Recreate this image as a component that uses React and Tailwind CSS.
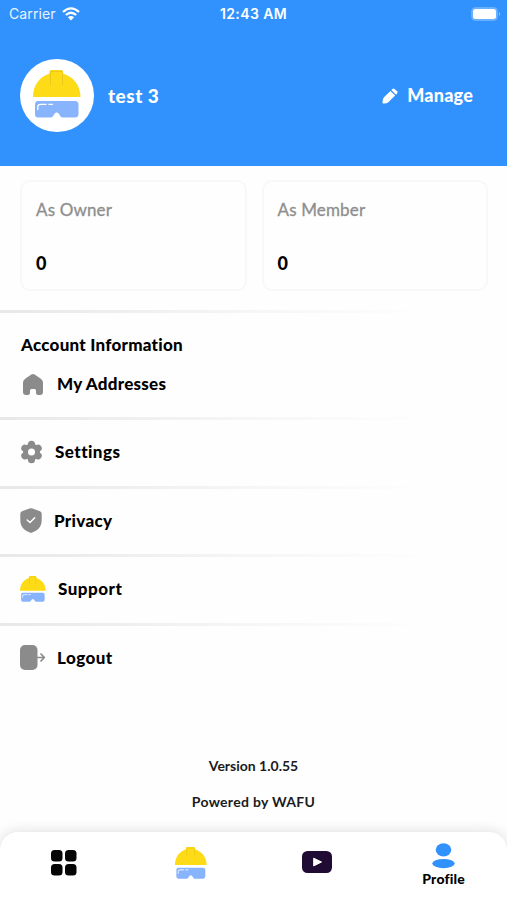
import React from "react";

const HelmetIcon = ({ className }) => (
  <svg viewBox="0 0 48 48" className={className}>
    <path
      d="M0 27C0 15 7 6.500 16.500 3.500V1.500Q16.500 0 18 0H28.500Q30 0 30 1.500V3.500C40 6.500 47.500 15 47.500 27Z"
      fill="#fddb17"
    />
    <path
      d="M17.500 15V1.500H29.500V15"
      fill="none"
      stroke="#d9b51c"
      strokeWidth="0.500"
    />
    <path
      d="M5 31H42Q45.500 31 45.500 34.500V44Q45.500 47.500 42 47.500H29.500C27 47.500 26.500 42.500 23.700 42.500S20.500 47.500 18 47.500H5Q2 47.500 2 44V34.500Q2 31 5 31Z"
      fill="#88b4fd"
    />
    <path
      d="M4.800 40V37Q4.800 34.300 7.500 34.300H13.500M15.500 34.300H20"
      fill="none"
      stroke="#fff"
      strokeWidth="1.300"
    />
  </svg>
);

const WifiIcon = () => (
  <svg viewBox="0 0 18 14" className="h-[14px] w-[18px]" fill="none" stroke="#fff">
    <path d="M1 5Q9-2.200 17 5" strokeWidth="2.300" />
    <path d="M3.800 8Q9 3.500 14.200 8" strokeWidth="2.200" />
    <path d="M9 13.500L5.900 10.300Q9 7.700 12.100 10.300Z" fill="#fff" stroke="none" />
  </svg>
);

const BatteryIcon = () => (
  <svg viewBox="0 0 30 14" className="h-[14px] w-[30px]">
    <rect x="0.500" y="0.500" width="26" height="13" rx="4" fill="#69b0ff" stroke="#69b0ff" />
    <rect x="2" y="2" width="23" height="10" rx="2.500" fill="#fff" />
    <path d="M28 5Q30 7 28 9Z" fill="#9ccbff" />
  </svg>
);

const PencilIcon = () => (
  <svg viewBox="0 0 16 16" className="h-[16px] w-[16px]" fill="#fff">
    <path d="M8.400 2.900L13.100 7.600L6.600 14Q5 15.600 1.500 15.500Q.4 15.500 .4 14.500Q.3 11 2 9.300Z" />
    <path d="M9.300 2L10.500 .9Q11.500 0 12.600 .9L15.100 3.300Q16 4.400 15.100 5.500L14 6.700Z" />
  </svg>
);

const HomeIcon = () => (
  <svg viewBox="0 0 20 21" className="ml-[2px] h-[21px] w-[20px]">
    <path
      d="M8.300 .6Q10 -.5 11.700 .6L17.800 4.700Q20 6.200 20 8.500V18Q20 21 17 21H15.500Q13 21 13 18.500V16.500Q13 15 11.500 15H8.500Q7 15 7 16.500V18.500Q7 21 4.500 21H3Q0 21 0 18V8.500Q0 6.200 2.200 4.700Z"
      fill="#8b8b8b"
    />
  </svg>
);

const GearIcon = () => (
  <svg viewBox="0 0 24 24" className="h-[24px] w-[23px]">
    <path
      d="M12 12V4M12 12V20M12 12L5 8M12 12L19 16M12 12L5 16M12 12L19 8"
      stroke="#8b8b8b"
      strokeWidth="7.400"
      strokeLinecap="round"
    />
    <circle cx="12" cy="12" r="8.800" fill="#8b8b8b" />
    <circle cx="12" cy="12" r="3.700" fill="#fff" />
  </svg>
);

const ShieldIcon = () => (
  <svg viewBox="0 0 22 25" className="h-[25px] w-[22px]">
    <path
      d="M9.500 .6Q11 0 12.500 .6L20 3.300Q21.700 4 21.700 5.700V12Q21.700 18 18 21.200Q15.300 23.600 11 25Q6.700 23.600 4 21.200Q.3 18 .3 12V5.700Q.3 4 2 3.300Z"
      fill="#8b8b8b"
    />
    <path
      d="M7.200 12L10 14.500L14.700 9.700"
      fill="none"
      stroke="#fff"
      strokeWidth="1.500"
      strokeLinecap="round"
      strokeLinejoin="round"
    />
  </svg>
);

const LogoutIcon = () => (
  <svg viewBox="0 0 25 25" className="h-[25px] w-[25px]">
    <rect width="17.500" height="25" rx="5" fill="#8b8b8b" />
    <path
      d="M17 12.500H24M20.500 8.500L24.300 12.500L20.500 16.500"
      fill="none"
      stroke="#8b8b8b"
      strokeWidth="1.600"
    />
  </svg>
);

const GridIcon = () => (
  <svg viewBox="0 0 26 26" className="h-[26px] w-[26px]" fill="#050505">
    <rect width="11.500" height="11.500" rx="3.500" />
    <rect x="14" width="11.500" height="11.500" rx="3.500" />
    <rect y="14" width="11.500" height="11.500" rx="3.500" />
    <rect x="14" y="14" width="11.500" height="11.500" rx="3.500" />
  </svg>
);

const VideoIcon = () => (
  <svg viewBox="0 0 30 22" className="h-[22px] w-[30px]">
    <rect width="30" height="22" rx="5.500" fill="#200b35" />
    <path d="M11.700 7.200L19.500 11L11.700 14.900Z" fill="#fff" stroke="#fff" strokeLinejoin="round" />
  </svg>
);

const ProfileIcon = () => (
  <svg viewBox="0 0 23 26" className="h-[26px] w-[23px]" fill="#3292fd">
    <ellipse cx="11.500" cy="6.800" rx="7.800" ry="6.600" />
    <ellipse cx="11.500" cy="20.600" rx="11.200" ry="4.600" />
  </svg>
);

const Divider = () => (
  <div className="h-[3px] bg-linear-to-r from-[#e8e8e8] via-[#f6f6f6] via-50% to-[#fefefe] to-85%" />
);

const stats = [
  { label: "As Owner", value: 0 },
  { label: "As Member", value: 0 },
];

const menu = [
  { label: "Settings", icon: <GearIcon />, spacing: "tracking-[0.45px]" },
  { label: "Privacy", icon: <ShieldIcon />, spacing: "tracking-[0.3px]" },
  {
    label: "Support",
    icon: <HelmetIcon className="h-[26px] w-[26px]" />,
    spacing: "tracking-[0.5px]",
  },
  { label: "Logout", icon: <LogoutIcon />, spacing: "tracking-[0.45px]" },
];

const App = () => {
  return (
    <div className="flex h-[900px] w-[507px] flex-col overflow-hidden bg-[#fefefe] font-[Lato,sans-serif] text-black [font-variant-ligatures:none]">
      {/* Header */}
      <header className="h-[166px] bg-[#3292fd] text-white">
        <div className="grid h-[27px] grid-cols-3 items-center pl-[9px] pr-[6px] font-[Inter,sans-serif] text-[14px]">
          <div className="flex items-center gap-[6px]">
            <span className="tracking-[0.1px] opacity-90">Carrier</span>
            <WifiIcon />
          </div>
          <span className="-ml-[3px] text-center font-semibold tracking-[0.4px]">12:43 AM</span>
          <div className="flex justify-end">
            <BatteryIcon />
          </div>
        </div>
        <div className="mt-[32px] flex items-center justify-between pl-[20px] pr-[34px]">
          <div className="flex items-center gap-[14px]">
            <div className="flex h-[73px] w-[74px] items-center justify-center rounded-full bg-white pb-[3px]">
              <HelmetIcon className="h-[48px] w-[48px]" />
            </div>
            <span className="pt-[2px] text-[19px] font-black tracking-[0.5px]">test 3</span>
          </div>
          <button className="flex items-center gap-[9px] text-[18px] font-black tracking-[0.2px]">
            <PencilIcon />
            Manage
          </button>
        </div>
      </header>

      {/* Project counts */}
      <section className="grid grid-cols-2 gap-[15px] pl-[20px] pr-[19px] pt-[14px]">
        {stats.map((stat) => (
          <div
            key={stat.label}
            className="h-[111px] rounded-[10px] border-2 border-[#f8f8f8] px-[14px] pt-[16px]"
          >
            <p className="text-[17px] leading-6 tracking-[0.15px] text-[#8e8e8e] [-webkit-text-stroke:0.3px_#8e8e8e]">
              {stat.label}
            </p>
            <p className="mt-[29px] text-[18px] leading-6 font-black">{stat.value}</p>
          </div>
        ))}
      </section>

      {/* Account menu */}
      <section className="pt-[19px] text-[17px] font-black">
        <Divider />
        <div className="h-[104px] pl-[21px] pt-[20px]">
          <h2 className="leading-6 tracking-[0.25px]">Account Information</h2>
          <div className="mt-[15px] flex items-center gap-[14px] leading-6">
            <HomeIcon />
            <span className="tracking-[0.25px]">My Addresses</span>
          </div>
        </div>
        {menu.map((item) => (
          <div key={item.label}>
            <Divider />
            <div className="flex h-[65.5px] items-center gap-[12px] pb-[2px] pl-[20px]">
              {item.icon}
              <span className={item.spacing}>{item.label}</span>
            </div>
          </div>
        ))}
      </section>

      {/* App version */}
      <footer className="mt-[63px] text-center text-[14px] font-bold text-[#1b1b1b]">
        <p className="leading-6">Version 1.0.55</p>
        <p className="mt-[12px] leading-6 tracking-[0.3px]">Powered by WAFU</p>
      </footer>

      {/* Bottom tabs */}
      <nav className="mt-auto grid h-[68px] grid-cols-4 rounded-t-[18px] bg-white shadow-[0_0_14px_rgba(0,0,0,0.14)]">
        <div className="flex justify-center pt-[18px] pl-[2px]">
          <GridIcon />
        </div>
        <div className="flex justify-center pt-[15px] pl-px">
          <HelmetIcon className="h-[32px] w-[32px]" />
        </div>
        <div className="flex justify-center pt-[19px]">
          <VideoIcon />
        </div>
        <div className="flex flex-col items-center pt-[11px]">
          <ProfileIcon />
          <span className="text-[14px] leading-5 font-black tracking-[0.2px]">Profile</span>
        </div>
      </nav>
    </div>
  );
};

export default App;
